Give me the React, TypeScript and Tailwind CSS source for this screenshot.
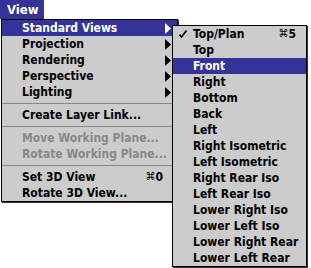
import React from 'react';

type Item =
  | { kind: 'sep' }
  | { kind: 'item'; label: string; sub?: boolean; key?: string; disabled?: boolean; active?: boolean };

const mainItems: Item[] = [
  { kind: 'item', label: 'Standard Views', sub: true, active: true },
  { kind: 'item', label: 'Projection', sub: true },
  { kind: 'item', label: 'Rendering', sub: true },
  { kind: 'item', label: 'Perspective', sub: true },
  { kind: 'item', label: 'Lighting', sub: true },
  { kind: 'sep' },
  { kind: 'item', label: 'Create Layer Link...' },
  { kind: 'sep' },
  { kind: 'item', label: 'Move Working Plane...', disabled: true },
  { kind: 'item', label: 'Rotate Working Plane...', disabled: true },
  { kind: 'sep' },
  { kind: 'item', label: 'Set 3D View', key: '0' },
  { kind: 'item', label: 'Rotate 3D View...' },
];

const views = [
  'Top/Plan',
  'Top',
  'Front',
  'Right',
  'Bottom',
  'Back',
  'Left',
  'Right Isometric',
  'Left Isometric',
  'Right Rear Iso',
  'Left Rear Iso',
  'Lower Right Iso',
  'Lower Left Iso',
  'Lower Right Rear',
  'Lower Left Rear',
];

function Arrow({ white }: { white?: boolean }) {
  return (
    <svg width="6" height="11" viewBox="0 0 6 11" className="shrink-0">
      <polygon points="0,0 6,5.5 0,11" fill={white ? '#fff' : '#000'} />
    </svg>
  );
}

function Check() {
  return (
    <svg width="8" height="8" viewBox="0 0 8 8">
      <polyline points="0.5,4.5 2.5,7 7.5,0.5" fill="none" stroke="#000" strokeWidth="1.6" />
    </svg>
  );
}

function Cmd({ k }: { k: string }) {
  return (
    <span className="flex items-center">
      <span className="font-['DejaVu_Sans',sans-serif] font-normal text-[11px]">⌘</span>
      <span>{k}</span>
    </span>
  );
}

export default function App() {
  return (
    <div className="relative w-[311px] h-[268px] bg-white overflow-hidden font-['DejaVu_Sans_Condensed','DejaVu_Sans',sans-serif] font-stretch-condensed font-bold text-[12px] text-black">
      <div className="flex h-[19px]">
        <div className="w-[44px] bg-[#333399] text-white pl-[7px] leading-[19px] text-[13px]">View</div>
      </div>

      <div className="absolute left-[1px] top-[19px] w-[177px] border border-black bg-[#cccccc] shadow-[1px_1px_0_#333]">
        {mainItems.map((it, i) =>
          it.kind === 'sep' ? (
            <div key={i} className="h-[7px] flex items-center">
              <div className="w-full h-px bg-[#888888]" />
            </div>
          ) : (
            <div
              key={i}
              className={
                'h-[16px] flex items-center pl-[20px] pr-[6px] ' +
                (it.active ? 'bg-[#333399] text-white' : it.disabled ? 'text-[#888888]' : '')
              }
            >
              <span className="flex-1 whitespace-nowrap">{it.label}</span>
              {it.sub && <Arrow white={it.active} />}
              {it.key && (
                <span className="pr-[8px]">
                  <Cmd k={it.key} />
                </span>
              )}
            </div>
          )
        )}
      </div>

      <div className="absolute left-[172px] top-[25px] w-[135px] border border-black bg-[#cccccc] shadow-[1px_1px_0_#333]">
        {views.map((v, i) => (
          <div
            key={v}
            className={'h-[16px] flex items-center pr-[10px] ' + (v === 'Front' ? 'bg-[#333399] text-white' : '')}
          >
            <span className="w-[20px] shrink-0 flex justify-center">{i === 0 && <Check />}</span>
            <span className="flex-1 whitespace-nowrap">{v}</span>
            {i === 0 && <Cmd k="5" />}
          </div>
        ))}
      </div>
    </div>
  );
}
